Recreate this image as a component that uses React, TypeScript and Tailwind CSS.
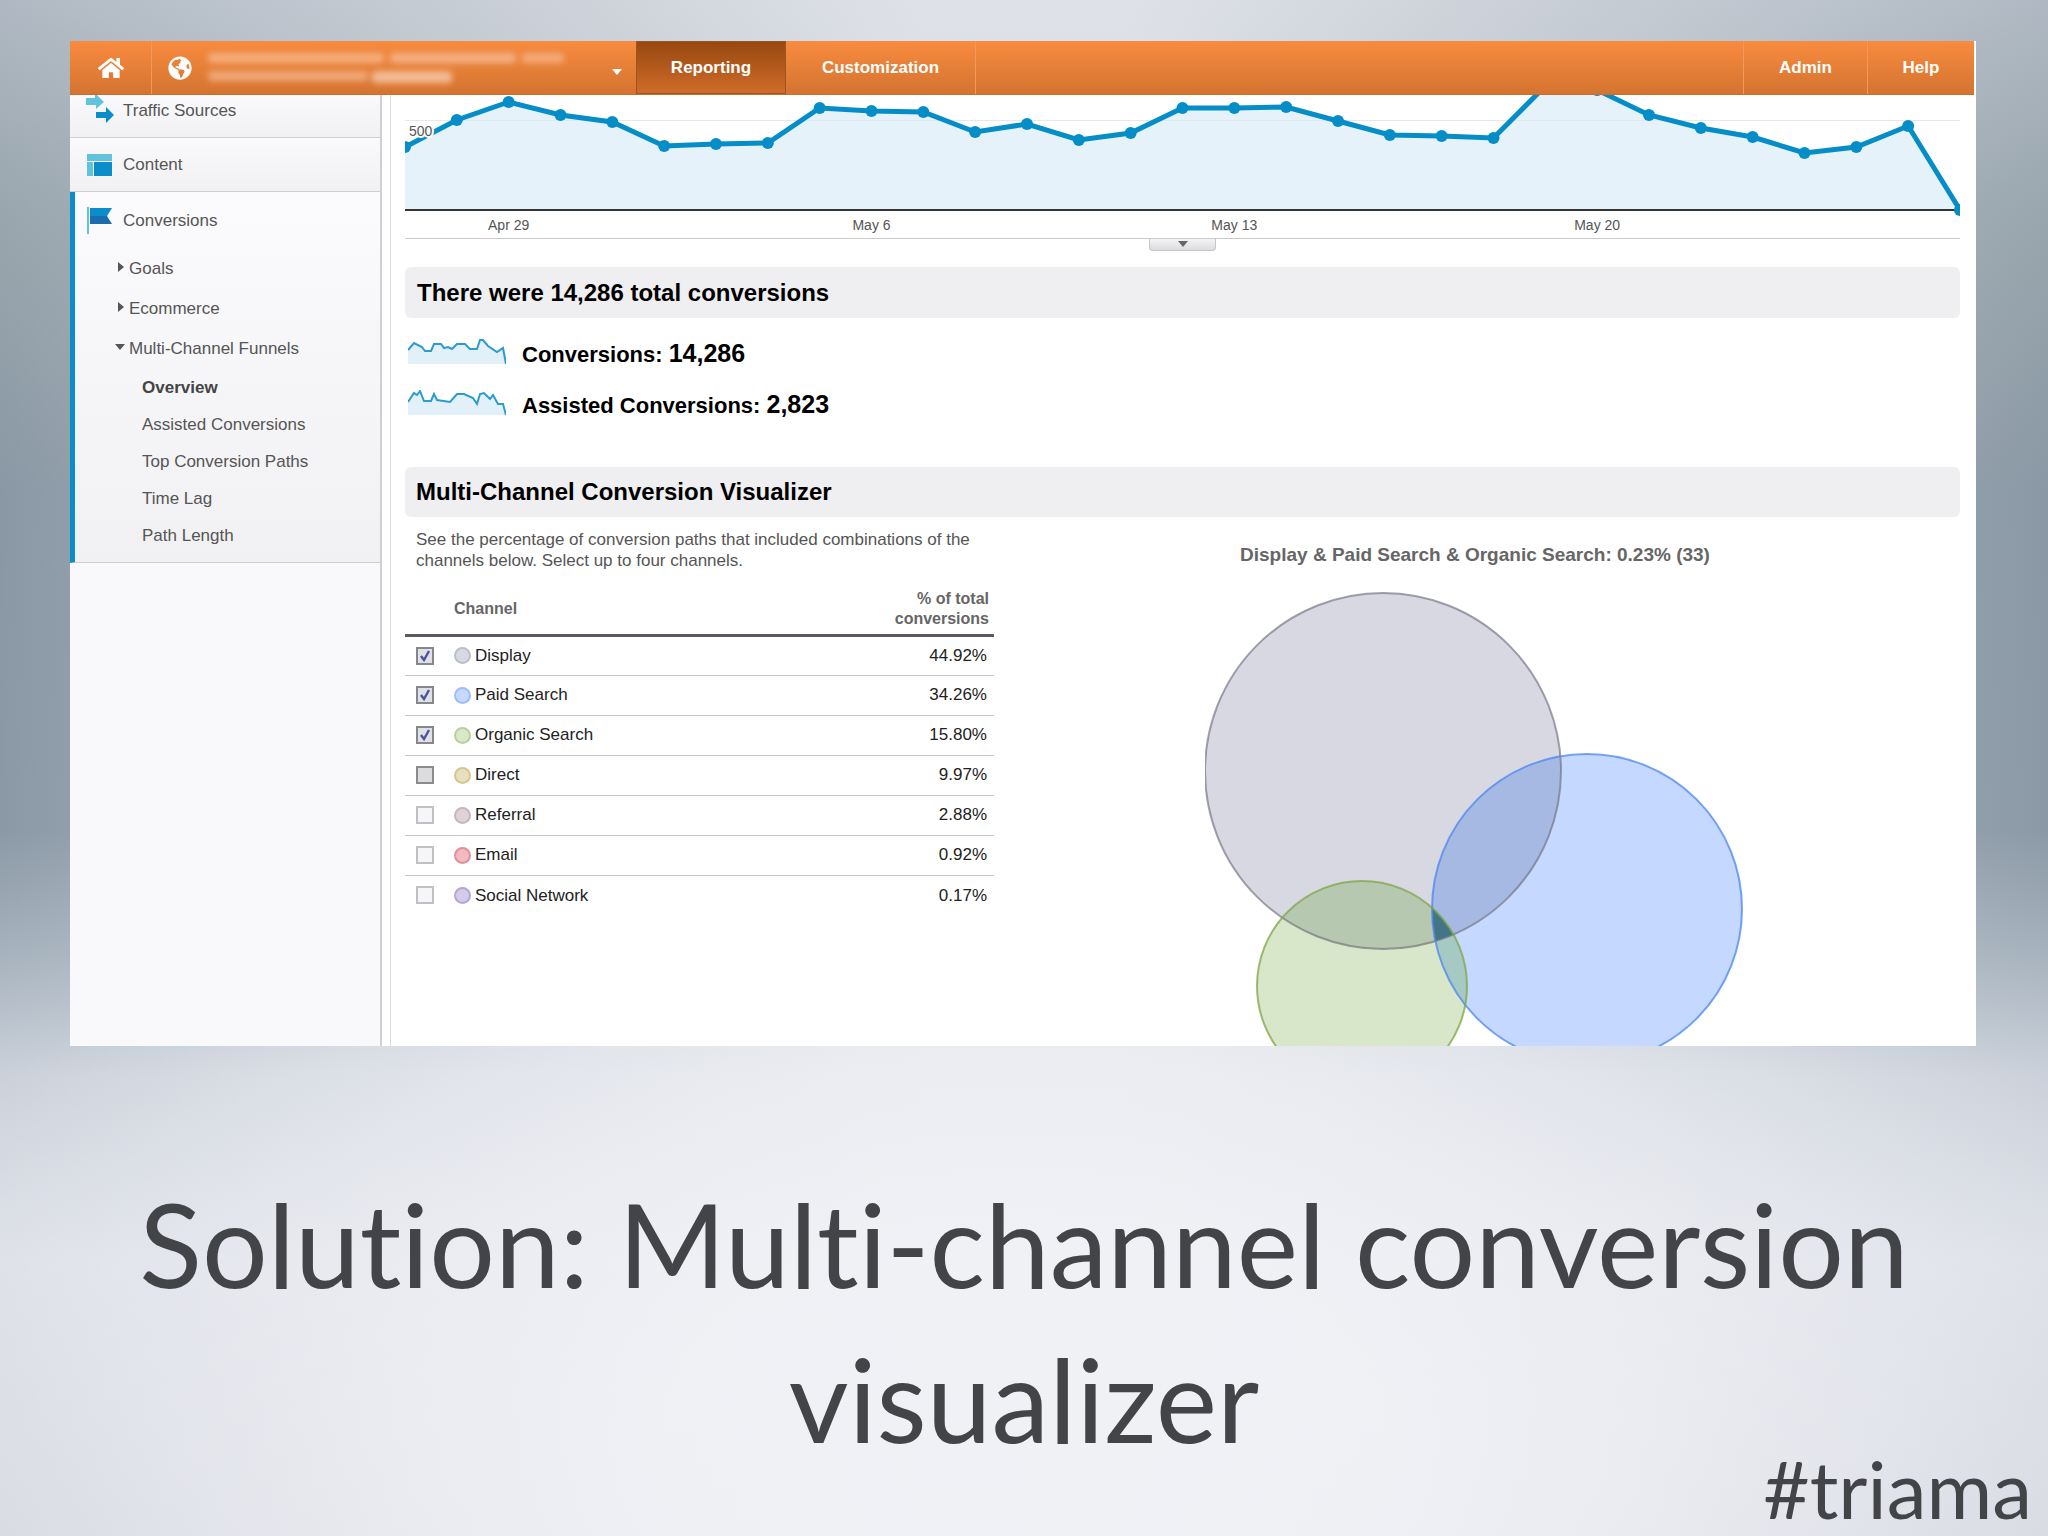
import { FaHome, FaGlobeAmericas } from "react-icons/fa";

const points = [
  147, 120, 102, 115, 122, 146, 144, 143, 108, 111, 112, 132, 124, 140, 133, 108,
  108, 107, 121, 135, 136, 138, 86, 90, 115, 128, 137, 153, 147, 126, 210,
].map((y, i) => ({ x: (i * 1555) / 30, y: y - 95 }));

const line = points.map((p) => `${p.x},${p.y}`).join(" ");

const dates = [
  { label: "Apr 29", day: 2 },
  { label: "May 6", day: 9 },
  { label: "May 13", day: 16 },
  { label: "May 20", day: 23 },
];

const channels = [
  { id: "display", name: "Display", share: "44.92%", dot: "bg-[#d8dae3] border-[#bcbec8]", checked: true, box: "bg-[#dfe1e6] border-[#85878c]" },
  { id: "paid", name: "Paid Search", share: "34.26%", dot: "bg-[#c6d9ff] border-[#9dbcf8]", checked: true, box: "bg-[#dfe1e6] border-[#85878c]" },
  { id: "organic", name: "Organic Search", share: "15.80%", dot: "bg-[#d9e7ca] border-[#b9d09b]", checked: true, box: "bg-[#dfe1e6] border-[#85878c]" },
  { id: "direct", name: "Direct", share: "9.97%", dot: "bg-[#e8dfc0] border-[#d6c68c]", checked: false, box: "bg-[#dcdcde] border-[#8b8b8e]" },
  { id: "referral", name: "Referral", share: "2.88%", dot: "bg-[#e0d2d9] border-[#c9b5bf]", checked: false, box: "bg-[#f6f6f8] border-[#c0c0c4]" },
  { id: "email", name: "Email", share: "0.92%", dot: "bg-[#f4b8c0] border-[#e0909c]", checked: false, box: "bg-[#f6f6f8] border-[#c0c0c4]" },
  { id: "social", name: "Social Network", share: "0.17%", dot: "bg-[#d3cbe8] border-[#b3a6d6]", checked: false, box: "bg-[#f6f6f8] border-[#c0c0c4]" },
];

const reports = ["Assisted Conversions", "Top Conversion Paths", "Time Lag", "Path Length"];

function Header() {
  return (
    <header className="mr-0.5 flex h-[54px] border-b border-[#c96f2e] bg-linear-to-b from-[#f88b3f] to-[#d47430] text-[17px] font-bold text-white">
      <a href="#home" aria-label="Home" className="flex w-[82px] items-center justify-center border-r border-[#f29a5c]">
        <FaHome className="size-[26px]" />
      </a>
      <button type="button" aria-label="Choose account" className="flex w-[484px] items-center pl-4">
        <FaGlobeAmericas className="size-6" />
        <span className="ml-4 flex w-[356px] flex-col gap-2 blur-[3px]">
          <span className="flex gap-1.5">
            <span className="h-2.5 w-[176px] rounded bg-[#f5ad7c]" />
            <span className="h-2.5 w-[126px] rounded bg-[#f5b083]" />
            <span className="h-2.5 flex-1 rounded bg-[#f4ab7a]" />
          </span>
          <span className="flex gap-1">
            <span className="h-2.5 w-[160px] rounded bg-[#f0a878]" />
            <span className="h-3 w-[80px] rounded bg-[#f3bb94]" />
          </span>
        </span>
        <svg viewBox="0 0 10 6" className="mt-2 ml-12 w-2.5" fill="currentColor">
          <path d="M0 0h10L5 6z" />
        </svg>
      </button>
      <nav className="flex flex-1">
        <a href="#reporting" className="flex w-[150px] items-center justify-center border border-[#9c5420] bg-linear-to-b from-[#98480f] to-[#cf6c2a]">
          Reporting
        </a>
        <a href="#customization" className="flex w-[190px] items-center justify-center border-r border-[#f29a5c]">
          Customization
        </a>
        <a href="#admin" className="ml-auto flex w-[124px] items-center justify-center border-l border-[#f29a5c]">
          Admin
        </a>
        <a href="#help" className="flex w-[107px] items-center justify-center border-l border-[#f29a5c]">
          Help
        </a>
      </nav>
    </header>
  );
}

function Sidebar() {
  return (
    <aside className="w-[312px] shrink-0 border-r-2 border-[#cfcfd4] bg-[#f9f9fc] text-[17px] leading-6 text-[#555]">
      <a href="#traffic" className="flex h-[43px] items-start border-b border-[#cfcfd3] bg-linear-to-b from-[#fafafc] to-[#f1f1f3] pl-4">
        <svg viewBox="0 0 28 28" className="size-7">
          <path d="M0 3h9V0h2l7 7-8 7v-4H0z" fill="#62c3dc" />
          <path d="M10 17h10v-5l8 8-8 8v-5H10z" fill="#0a8dc8" />
        </svg>
        <span className="mt-1 ml-[9px]">Traffic Sources</span>
      </a>
      <a href="#content" className="flex h-[54px] items-center border-b border-[#cfcfd3] bg-linear-to-b from-[#fafafc] to-[#f1f1f3] pl-[17px]">
        <svg viewBox="0 0 25 22" className="w-[25px]">
          <path d="M0 0h25v7H0zM0 8h6v14H0z" fill="#62c3dc" />
          <path d="M7 8h18v14H7z" fill="#0a8dc8" />
        </svg>
        <span className="ml-[11px]">Content</span>
      </a>
      <div className="h-[371px] border-b border-l-5 border-b-[#cfcfd3] border-l-[#0a8dc8] bg-linear-to-b from-[#fbfbfd] to-[#f1f1f3]">
        <a href="#conversions" className="flex h-[57px] items-center pl-3">
          <svg viewBox="0 0 25 27" className="w-[25px]">
            <path d="M0 0h2v27H0z" fill="#62c3dc" />
            <path d="M3 1h22l-5 8H3z" fill="#0a8dc8" />
            <path d="M3 9h17l5 8H3z" fill="#1b6cab" />
          </svg>
          <span className="ml-[11px]">Conversions</span>
        </a>
        <ul>
          {["Goals", "Ecommerce"].map((name) => (
            <li key={name} className="flex h-10 items-center pl-[43px]">
              <svg viewBox="0 0 6 10" className="mb-1 w-1.5" fill="#555">
                <path d="M0 0l6 5-6 5z" />
              </svg>
              <a href="#group" className="ml-[5px]">{name}</a>
            </li>
          ))}
          <li>
            <div className="flex h-10 items-center pl-10">
              <svg viewBox="0 0 10 6" className="mb-1 w-2.5" fill="#555">
                <path d="M0 0h10L5 6z" />
              </svg>
              <a href="#funnels" className="ml-1">Multi-Channel Funnels</a>
            </div>
            <ul className="pl-[67px] leading-[37px]">
              <li className="font-bold text-[#444]"><a href="#overview">Overview</a></li>
              {reports.map((name) => (
                <li key={name}><a href="#report">{name}</a></li>
              ))}
            </ul>
          </li>
        </ul>
      </div>
    </aside>
  );
}

function Timeline() {
  return (
    <div className="flex flex-col">
      <svg viewBox="0 0 1555 143" className="w-full" fontFamily="Liberation Sans, sans-serif" fontSize="14" fill="#555">
        <path d="M0 25.5h1555" stroke="#e8e8ea" />
        <polygon points={`0,115 ${line} 1555,115`} fill="#d9ebf8" fillOpacity="0.65" />
        <path d="M0 115h1555" stroke="#333" strokeWidth="2" />
        <polyline points={line} fill="none" stroke="#058dc7" strokeWidth="5" />
        {points.map((p) => (
          <circle key={p.x} cx={p.x} cy={p.y} r="6" fill="#058dc7" />
        ))}
        <text x="4" y="41" stroke="#fff" strokeWidth="4" paintOrder="stroke">500</text>
        {dates.map((d) => (
          <text key={d.label} x={points[d.day].x} y="135" textAnchor="middle">{d.label}</text>
        ))}
      </svg>
      <div className="flex h-[29px] items-start justify-center border-t border-[#cacacd]">
        <button type="button" aria-label="Expand chart" className="flex h-3 w-[67px] items-start justify-center rounded-b border border-t-0 border-[#c6c6ca] bg-linear-to-b from-[#f4f4f5] to-[#dcdcdf] pt-0.5">
          <svg viewBox="0 0 10 6" className="w-2.5" fill="#666">
            <path d="M0 0h10L5 6z" />
          </svg>
        </button>
      </div>
    </div>
  );
}

function Sparkline({ d }: { d: string }) {
  return (
    <svg viewBox="0 0 98 25" className="mb-1 h-[25px] w-[98px]">
      <path d={`${d}V25H0z`} fill="#e2f0fa" />
      <path d={d} fill="none" stroke="#2d9bd0" strokeWidth="2" />
    </svg>
  );
}

function Venn() {
  return (
    <figure className="flex w-[540px] flex-col items-center">
      <figcaption className="mt-6 text-[19px] leading-7 font-bold text-[#666]">
        Display &amp; Paid Search &amp; Organic Search: 0.23% (33)
      </figcaption>
      <svg viewBox="1204 569 540 477" className="w-[540px]">
        <defs>
          <clipPath id="gray"><circle cx="1382" cy="771" r="178" /></clipPath>
          <clipPath id="blue"><circle cx="1586" cy="909" r="155" /></clipPath>
        </defs>
        <circle cx="1382" cy="771" r="178" fill="#d7d8e2" />
        <circle cx="1586" cy="909" r="155" fill="#c5d8ff" />
        <circle cx="1361" cy="986" r="105" fill="#d8e6c9" />
        <circle cx="1586" cy="909" r="155" fill="#a6b9e3" clipPath="url(#gray)" />
        <circle cx="1361" cy="986" r="105" fill="#b6c8b0" clipPath="url(#gray)" />
        <circle cx="1361" cy="986" r="105" fill="#a6c9c3" clipPath="url(#blue)" />
        <g clipPath="url(#gray)">
          <circle cx="1361" cy="986" r="105" fill="#447586" clipPath="url(#blue)" />
        </g>
        <circle cx="1382" cy="771" r="178" fill="none" stroke="#707080" strokeOpacity="0.65" strokeWidth="2" />
        <circle cx="1586" cy="909" r="155" fill="none" stroke="#4a86f0" strokeOpacity="0.75" strokeWidth="2" />
        <circle cx="1361" cy="986" r="105" fill="none" stroke="#7da544" strokeOpacity="0.75" strokeWidth="2" />
      </svg>
    </figure>
  );
}

function ChannelTable() {
  return (
    <table className="mt-[13px] w-full text-[17px] text-[#222]">
      <thead>
        <tr className="h-[51px] border-b-3 border-[#5a5a60] text-[16px] leading-5 text-[#666]">
          <th className="w-[49px]" aria-label="Selected" />
          <th className="text-left">Channel</th>
          <th className="w-[110px] pr-[5px] text-right">% of total conversions</th>
        </tr>
      </thead>
      <tbody>
        {channels.map((c) => (
          <tr key={c.id} className="h-10 border-b border-[#c8c8cc] last:border-0">
            <td className="pl-[11px]">
              <span className="grid size-[18px] place-items-center">
                <input
                  id={c.id}
                  type="checkbox"
                  defaultChecked={c.checked}
                  className={`col-start-1 row-start-1 size-[18px] appearance-none border-2 ${c.box}`}
                />
                {c.checked && (
                  <svg viewBox="0 0 12 12" className="pointer-events-none col-start-1 row-start-1 size-3" fill="none" stroke="#4a549c" strokeWidth="2.4">
                    <path d="M2 6l3 4 5-9" />
                  </svg>
                )}
              </span>
            </td>
            <td>
              <label htmlFor={c.id} className="flex items-center gap-1">
                <span className={`size-[17px] rounded-full border-2 ${c.dot}`} />
                {c.name}
              </label>
            </td>
            <td className="pr-[7px] text-right">{c.share}</td>
          </tr>
        ))}
      </tbody>
    </table>
  );
}

export default function App() {
  return (
    <div className="relative flex min-h-screen flex-col bg-[radial-gradient(ellipse_60%_45%_at_50%_95%,#f1f2f6e0_30%,#f1f2f600),linear-gradient(to_right,#eeeff400,#eeeff4c0_45%,#eeeff4c0_55%,#eeeff400),linear-gradient(to_bottom,#b0b9c3_0%,#99a6ad_14%,#8a98a5_32%,#8b99a6_54%,#a6b2bd_62%,#cbd1da_70%,#dcdfe7_82%,#d3d6df_100%)] font-['Liberation_Sans',sans-serif]">
      <div className="mt-[41px] mr-[72px] ml-[70px] flex h-[1005px] flex-col overflow-hidden bg-white">
        <Header />
        <div className="flex min-h-0 flex-1">
          <Sidebar />
          <main className="ml-2 flex-1 border-l border-[#dcdce2] pr-4 pl-[14px]">
            <Timeline />
            <h2 className="flex h-[51px] items-center rounded-md bg-[#efeef0] pl-3 text-[24px] font-bold text-black">
              There were 14,286 total conversions
            </h2>
            <div className="flex h-[149px] flex-col pt-[10px] pl-[3px] text-[22px] leading-[51px] font-bold text-black">
              <div className="flex h-[51px] items-center gap-4">
                <Sparkline d="M0 11L6 4L14 8L17 12H23L26 5H33L36 9L40 8L44 10L49 5H57L62 10H69L72 1H75L80 7L89 13L95 9L98 25" />
                <p>Conversions: <span className="text-[25px]">14,286</span></p>
              </div>
              <div className="flex h-[51px] items-center gap-4">
                <Sparkline d="M0 12L6 3L9 5L12 1L16 11L23 11L26 4L29 10L42 12L49 4L56 4L65 8L69 14L72 4L76 3L82 9L85 5L90 14L95 14L98 25" />
                <p>Assisted Conversions: <span className="text-[25px]">2,823</span></p>
              </div>
            </div>
            <h2 className="flex h-[50px] items-center rounded-md bg-[#efeef0] pl-[11px] text-[24px] font-bold text-black">
              Multi-Channel Conversion Visualizer
            </h2>
            <div className="flex">
              <section className="w-[589px] shrink-0 pt-3">
                <p className="pl-[11px] text-[17px] leading-[21px] text-[#555]">
                  See the percentage of conversion paths that included combinations of the channels below. Select up to four channels.
                </p>
                <ChannelTable />
              </section>
              <div className="flex flex-1 justify-center pr-1">
                <Venn />
              </div>
            </div>
          </main>
        </div>
      </div>
      <h1 className="mt-[120px] px-16 text-center font-[Lato,sans-serif] text-[116px] leading-[155px] text-[#434447] [font-variant-ligatures:none]">
        Solution: Multi-channel conversion visualizer
      </h1>
      <p className="absolute right-4 bottom-2 font-[Lato,sans-serif] text-[80px] leading-20 text-[#434447]">#triama</p>
    </div>
  );
}
